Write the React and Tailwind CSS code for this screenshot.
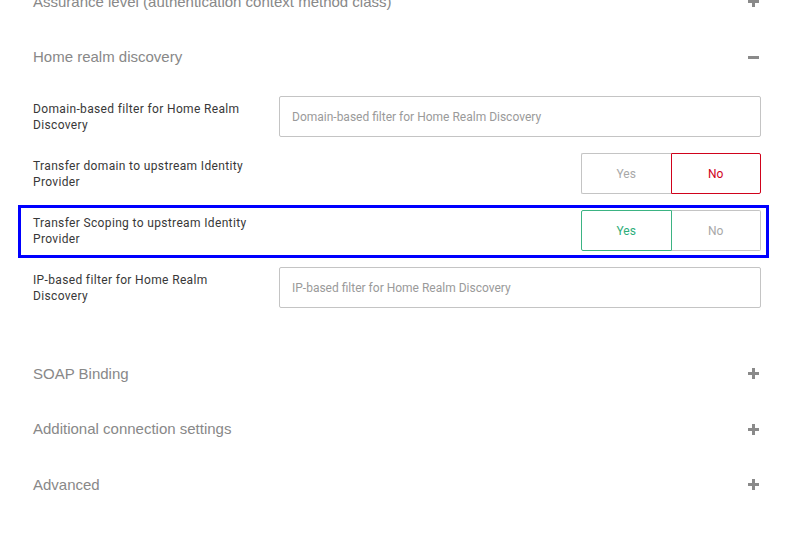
import React from 'react';

const sans = { fontFamily: '"Liberation Sans", Arial, sans-serif' };

// plus / minus icon on the right of a section header
const ToggleIcon = ({ open }) => (
    <svg width="11" height="11" viewBox="0 0 11 11" className="shrink-0">
        <rect x="0" y="4" width="11" height="3" fill="#8a8a8a" />
        {!open && <rect x="4" y="0" width="3" height="11" fill="#8a8a8a" />}
    </svg>
);

const SectionHeader = ({ title, open, className = '' }) => (
    <div className={`flex h-[55.5px] items-center justify-between pr-[2px] ${className}`}>
        <span className="text-[15px] text-[#888888]" style={sans}>{title}</span>
        <ToggleIcon open={open} />
    </div>
);

const Label = ({ children }) => (
    <div className="w-[246px] shrink-0 pr-[24px] text-[12px] leading-[16px] tracking-[0.35px] text-[#383838]">{children}</div>
);

const TextRow = ({ label, placeholder }) => (
    <div className="flex h-[41px] items-center">
        <Label>{label}</Label>
        <input
            className="h-[41px] flex-1 rounded-[2px] border border-[#c4c4c4] px-[12px] text-[12px] text-[#333] outline-none placeholder:text-[#9a9a9a]"
            placeholder={placeholder}
        />
    </div>
);

const YesNo = ({ value }) => (
    <div className="ml-auto flex h-[41px] w-[180px]">
        <button
            className={
                value === 'yes'
                    ? 'flex-1 rounded-l-[2px] border border-[#3bb383] text-[12px] text-[#2fae7a]'
                    : 'flex-1 rounded-l-[2px] border border-r-0 border-[#c4c4c4] text-[12px] text-[#a8a8a8]'
            }
        >
            Yes
        </button>
        <button
            className={
                value === 'no'
                    ? 'flex-1 rounded-r-[2px] border border-[#d0021b] text-[12px] text-[#d0021b]'
                    : 'flex-1 rounded-r-[2px] border border-l-0 border-[#c4c4c4] text-[12px] text-[#a8a8a8]'
            }
        >
            No
        </button>
    </div>
);

const SwitchRow = ({ label, value }) => (
    <div className="flex h-[41px] items-center">
        <Label>{label}</Label>
        <YesNo value={value} />
    </div>
);

export default function App() {
    return (
        <div className="h-[548px] w-[786px] overflow-hidden bg-white" style={{ fontFamily: 'Roboto, sans-serif' }}>
            <div className="pl-[33px] pr-[25px]">
                <SectionHeader title="Assurance level (authentication context method class)" className="-mt-[26px]" />
                <SectionHeader title="Home realm discovery" open />

                <div className="flex flex-col gap-[16px] pt-[11px] pb-[38px]">
                    <TextRow
                        label="Domain-based filter for Home Realm Discovery"
                        placeholder="Domain-based filter for Home Realm Discovery"
                    />
                    <SwitchRow label="Transfer domain to upstream Identity Provider" value="no" />

                    {/* highlighted row */}
                    <div className="-mt-[5px] -mb-[7px] -ml-[15px] -mr-[8px] border-[3px] border-[#0000ff] pt-[2px] pb-[4px] pl-[12px] pr-[5px]">
                        <SwitchRow label="Transfer Scoping to upstream Identity Provider" value="yes" />
                    </div>

                    <TextRow
                        label="IP-based filter for Home Realm Discovery"
                        placeholder="IP-based filter for Home Realm Discovery"
                    />
                </div>

                <SectionHeader title="SOAP Binding" />
                <SectionHeader title="Additional connection settings" />
                <SectionHeader title="Advanced" />
            </div>
        </div>
    );
}
